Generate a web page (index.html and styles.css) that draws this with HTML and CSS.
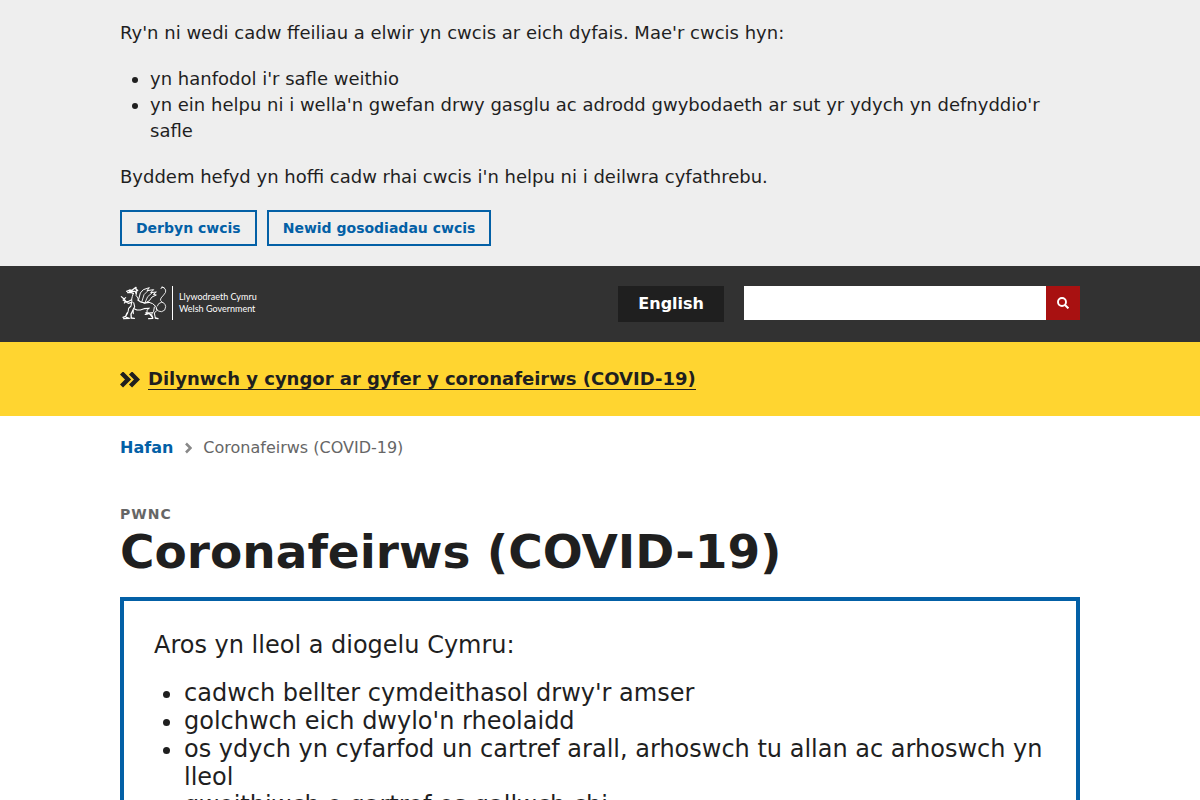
FILE: index.html
```html
<!DOCTYPE html>
<html lang="cy">
<head>
<meta charset="utf-8">
<meta name="viewport" content="width=device-width, initial-scale=1">
<title>Coronafeirws (COVID-19) | LLYW.CYMRU</title>
<link rel="stylesheet" href="styles.css">
</head>
<body>
<section class="cookies" aria-label="Cwcis">
  <div class="container cookies-body">
    <p>Ry'n ni wedi cadw ffeiliau a elwir yn cwcis ar eich dyfais. Mae'r cwcis hyn:</p>
    <ul class="list">
      <li>yn hanfodol i'r safle weithio</li>
      <li>yn ein helpu ni i wella'n gwefan drwy gasglu ac adrodd gwybodaeth ar sut yr ydych yn defnyddio'r safle</li>
    </ul>
    <p>Byddem hefyd yn hoffi cadw rhai cwcis i'n helpu ni i deilwra cyfathrebu.</p>
    <div class="actions">
      <button class="outline-button" type="button">Derbyn cwcis</button>
      <button class="outline-button" type="button">Newid gosodiadau cwcis</button>
    </div>
  </div>
</section>

<header class="site-header">
  <div class="container header-row">
    <a class="logo" href="#">
      <svg class="dragon" viewBox="30 30 144 102" aria-hidden="true">
        <g fill="none" stroke="#fff" stroke-width="2.6" stroke-linecap="round" stroke-linejoin="round">
          <path stroke-width="4" d="M50 46l9-4 7 1 12-9 0 6 5 3-5 3-1 5M53 50l9-1 8 3M58 46h16"/>
          <path stroke-width="3" d="M70 52l-3 9-2 9 1 9M80 49l-2 9 6 8 1 8"/>
          <path stroke-width="3.400" d="M34 62l8 7 5-4M39 72l8 5 9-1 9-5M39 66l9 10M47 77l-4 4M65 79l-10 3-8-5"/>
          <path stroke-width="3.200" d="M65 79l-2 11-7 7-2 11-5 9M71 80l3 12-5 9 1 12"/>
          <path stroke-width="4" d="M52 110l-5 11-8 3M49 124l9 3-17 1M69 103l-6 11 1 12M63 126l10 1"/>
          <path stroke-width="3.400" d="M72 98l9 4h10l11-4 15-1M84 72l8 6 13 3 13-2"/>
          <path stroke-width="3" d="M86 70l5-19 9-10 18-6-7 9 20-3-9 9 17-2-9 7 9 2-13 6-8 11-14 8-9-4"/>
          <path d="M96 76l6-20 13-13M105 80l8-18 13-11"/>
          <path stroke-width="3" d="M117 79l11 4 10 9 3 11-8 8 3 15M117 96l-7 9 5 6 12-1M133 93l-2 13-6 8 3 13"/>
          <path stroke-width="4" d="M108 110l12 4 8 11M136 126l8 2M128 127l-12 1M112 114l-6 1"/>
          <path d="M139 99q4 9 16 8 12-2 12-15-2-13-13-13-10 2-12 11M157 79q-10-6-4-13l8-9q8-8 6-15-3-8-11-9M153 38l3-5 6 2"/>
        </g>
      </svg>
      <span class="logo-text"><span>Llywodraeth Cymru</span><span>Welsh Government</span></span>
    </a>
    <a class="language" href="#" lang="en">English</a>
    <form class="search" role="search">
      <input class="search-input" type="search" aria-label="Chwilio">
      <button class="search-button" type="submit" aria-label="Chwilio">
        <svg class="search-icon" viewBox="0 0 12 12" aria-hidden="true"><circle cx="5" cy="5" r="4" fill="none" stroke="#fff" stroke-width="1.9"/><path d="M8 8l3.400 3.400" stroke="#fff" stroke-width="2"/></svg>
      </button>
    </form>
  </div>
</header>

<div class="alert">
  <div class="container alert-row">
    <svg class="alert-icon" viewBox="0 0 20 16" aria-hidden="true"><path d="M1.500 1L8 7.500 1.500 14M10.500 1L17 7.500 10.500 14" fill="none" stroke="#1f1f1f" stroke-width="4.400"/></svg>
    <a class="alert-link" href="#">Dilynwch y cyngor ar gyfer y coronafeirws (COVID-19)</a>
  </div>
</div>

<main class="container">
  <nav class="breadcrumb" aria-label="Briwsion bara">
    <a class="breadcrumb-link" href="#">Hafan</a>
    <svg class="chevron" viewBox="0 0 8 12" aria-hidden="true"><path d="M2 1.500L6.500 6 2 10.500" fill="none" stroke="#888" stroke-width="2.600"/></svg>
    <span>Coronafeirws (COVID-19)</span>
  </nav>
  <p class="kicker">Pwnc</p>
  <h1 class="title">Coronafeirws (COVID-19)</h1>
  <section class="notice">
    <p>Aros yn lleol a diogelu Cymru:</p>
    <ul class="list">
      <li>cadwch bellter cymdeithasol drwy'r amser</li>
      <li>golchwch eich dwylo'n rheolaidd</li>
      <li>os ydych yn cyfarfod un cartref arall, arhoswch tu allan ac arhoswch yn lleol</li>
      <li>gweithiwch o gartref os gallwch chi</li>
    </ul>
  </section>
</main>
</body>
</html>
```
FILE: styles.css
```css
* { box-sizing: border-box; }

body {
  margin: 0;
  background: #fff;
  color: #1f1f1f;
  font: 18px/26px "DejaVu Sans", sans-serif;
}

p, h1, ul { margin: 0; }
a { color: inherit; text-decoration: none; }
button { font-family: inherit; cursor: pointer; }

.container {
  max-width: 1000px;
  margin: 0 auto;
  padding: 0 20px;
}

.list { padding-left: 30px; }

.cookies { background: #eee; padding: 20px 0; }
.cookies-body { display: flex; flex-direction: column; gap: 20px; }
.actions { display: flex; flex-wrap: wrap; gap: 10px; }

.outline-button {
  height: 36px;
  padding: 0 14px;
  border: 2px solid #0360a6;
  background: transparent;
  color: #0360a6;
  font-size: 14px;
  font-weight: bold;
}

.site-header { background: #323232; padding: 20px 0; }
.header-row { display: flex; align-items: flex-start; gap: 20px; }

.logo { display: flex; margin-right: auto; color: #fff; }
.dragon { width: 48px; height: 34px; margin-right: 4px; }
.logo-text {
  display: flex;
  flex-direction: column;
  justify-content: center;
  padding-left: 6px;
  border-left: 1px solid #fff;
  font: 9px/12px Lato, sans-serif;
}

.language {
  padding: 0 20px;
  background: #1f1f1f;
  color: #fff;
  font-size: 16px;
  font-weight: bold;
  line-height: 36px;
}

.search { display: flex; flex: 0 1 336px; height: 34px; }
.search-input {
  flex: 1;
  min-width: 0;
  padding: 0 10px;
  border: 0;
  border-radius: 0;
  background: #fff;
  font: inherit;
}
.search-button {
  display: grid;
  place-items: center;
  width: 34px;
  padding: 0;
  border: 0;
  background: #a81111;
}
.search-icon { width: 12px; height: 12px; }

.alert { background: #ffd530; padding: 27px 0 26px; }
.alert-row { display: flex; align-items: center; gap: 8px; }
.alert-icon { flex: none; width: 20px; height: 16px; }
.alert-link {
  border-bottom: 1px solid #1f1f1f;
  font-weight: bold;
  line-height: 20px;
}

.breadcrumb {
  display: flex;
  align-items: center;
  gap: 11px;
  padding: 20px 0;
  color: #666;
  font-size: 16px;
  line-height: 24px;
}
.breadcrumb-link { color: #0360a6; font-weight: bold; }
.chevron { width: 8px; height: 12px; }

.kicker {
  margin-top: 24px;
  color: #666;
  font-size: 14px;
  font-weight: bold;
  line-height: 20px;
  letter-spacing: 1px;
  text-transform: uppercase;
}
.title { font-size: 47px; line-height: 56px; }

.notice {
  display: flex;
  flex-direction: column;
  gap: 20px;
  margin-top: 17px;
  padding: 30px;
  border: 4px solid #0360a6;
  font-size: 24px;
  line-height: 28px;
}
```
